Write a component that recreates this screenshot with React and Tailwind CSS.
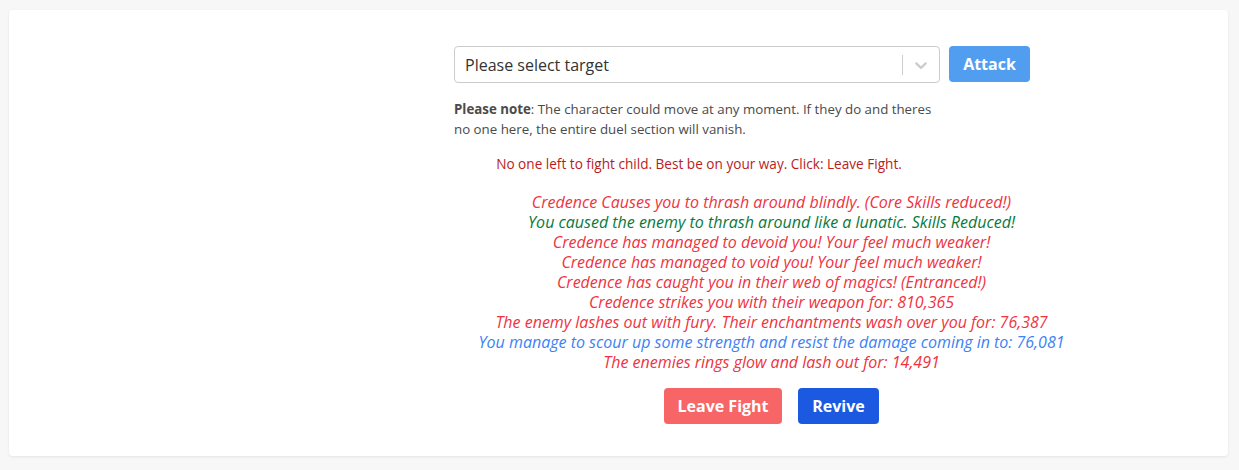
import React from 'react';

const font = { fontFamily: '"Open Sans", "Lato", sans-serif' };

const battleMessages = [
  { text: 'Credence Causes you to thrash around blindly. (Core Skills reduced!)', color: 'text-[#ef3340]' },
  { text: 'You caused the enemy to thrash around like a lunatic. Skills Reduced!', color: 'text-[#077a3b]' },
  { text: 'Credence has managed to devoid you! Your feel much weaker!', color: 'text-[#ef3340]' },
  { text: 'Credence has managed to void you! Your feel much weaker!', color: 'text-[#ef3340]' },
  { text: 'Credence has caught you in their web of magics! (Entranced!)', color: 'text-[#ef3340]' },
  { text: 'Credence strikes you with their weapon for: 810,365', color: 'text-[#ef3340]' },
  { text: 'The enemy lashes out with fury. Their enchantments wash over you for: 76,387', color: 'text-[#ef3340]' },
  { text: 'You manage to scour up some strength and resist the damage coming in to: 76,081', color: 'text-[#3b82f6]' },
  { text: 'The enemies rings glow and lash out for: 14,491', color: 'text-[#ef3340]' },
];

function TargetSelect() {
  return (
    <div className="flex h-[37px] w-[486px] items-center rounded border border-[#cccccc] bg-white">
      <div className="flex-1 pl-[10px] text-base text-[#333333]">Please select target</div>
      <div className="h-[20px] w-px bg-[#cccccc]" />
      <div className="flex w-[36px] items-center justify-center">
        <svg width="20" height="20" viewBox="0 0 20 20" fill="#cccccc">
          <path d="M4.516 7.548c0.436-0.446 1.043-0.481 1.576 0l3.908 3.747 3.908-3.747c0.533-0.481 1.141-0.446 1.574 0 0.436 0.445 0.408 1.197 0 1.615-0.406 0.418-4.695 4.502-4.695 4.502-0.217 0.223-0.502 0.335-0.787 0.335s-0.57-0.112-0.789-0.335c0 0-4.287-4.084-4.695-4.502s-0.436-1.170 0-1.615z" />
        </svg>
      </div>
    </div>
  );
}

export default function App() {
  return (
    <div className="min-h-[470px] bg-[#f7f7f7] pl-[9px] pt-[10px]" style={font}>
      <div className="h-[446px] w-[1219px] rounded-sm bg-white shadow-[0_1px_3px_rgba(0,0,0,0.08)]">
        <div className="ml-[445px] w-[635px] pt-[36px]">
          <div className="flex items-start gap-[9px]">
            <TargetSelect />
            <button className="h-[36px] w-[81px] rounded-sm bg-[#519ef1] text-base font-bold text-white">
              Attack
            </button>
          </div>
          <p className="mt-4 w-[486px] text-[13.3px] leading-5 text-[#4a4a4a]">
            <strong className="font-bold">Please note</strong>: The character could move at any moment. If they do and theres
            no one here, the entire duel section will vanish.
          </p>
          <p className="mt-[15px] w-[490px] text-center text-[13.6px] leading-5 text-[#b91c1c]">
            No one left to fight child. Best be on your way. Click: Leave Fight.
          </p>
          <div className="mt-[18px] text-center text-base italic leading-5">
            {battleMessages.map((m, i) => (
              <div key={i} className={m.color}>
                {m.text}
              </div>
            ))}
          </div>
          <div className="mt-4 flex justify-center gap-4">
            <button className="h-[36px] w-[118px] rounded-sm bg-[#f86566] text-base font-bold text-white">
              Leave Fight
            </button>
            <button className="h-[36px] w-[81px] rounded-sm bg-[#1b5ae0] text-base font-bold text-white">
              Revive
            </button>
          </div>
        </div>
      </div>
    </div>
  );
}
